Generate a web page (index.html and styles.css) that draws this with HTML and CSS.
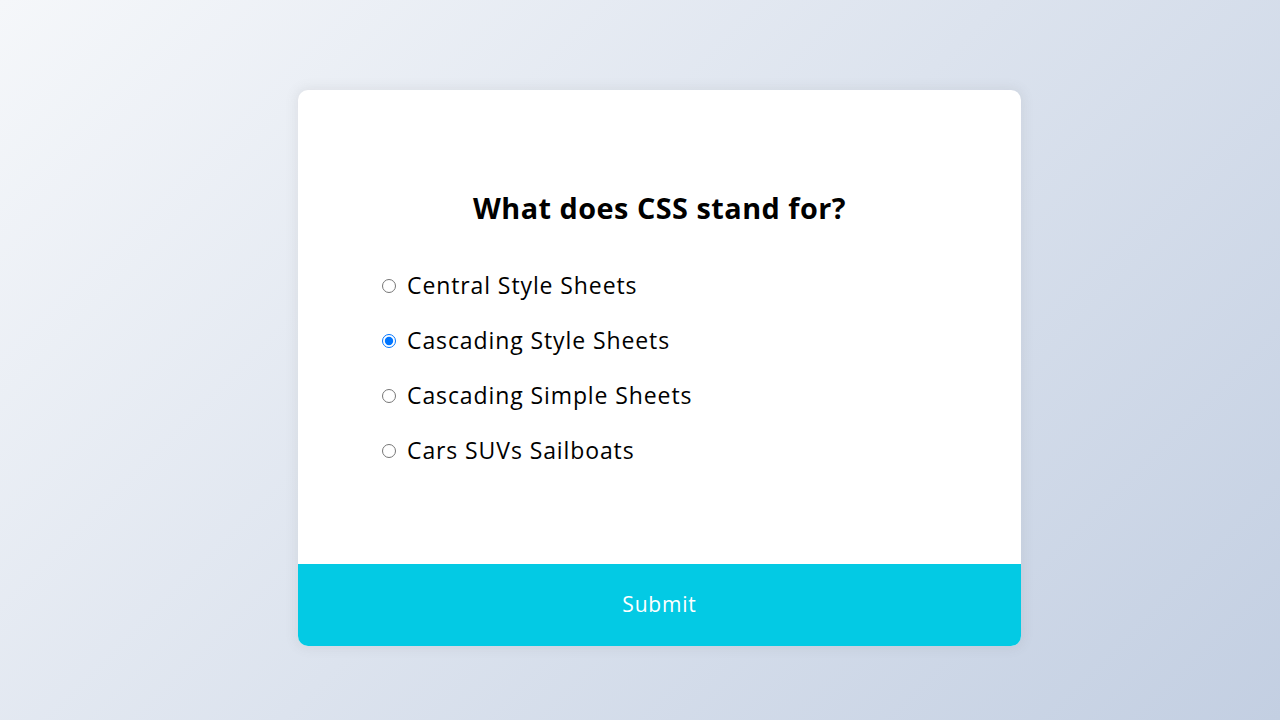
FILE: index.html
```html
<!DOCTYPE html>
<html lang="en">
<head>
<meta charset="UTF-8">
<title>Quiz</title>
<link rel="stylesheet" href="styles.css">
</head>
<body>
  <div class="stage">
    <div class="quiz-container">
      <div class="quiz-header">
        <h2 class="question">What does CSS stand for?</h2>
        <ul class="answers">
          <li><input type="radio" name="answer" id="a" class="answer"> <label for="a">Central Style Sheets</label></li>
          <li><input type="radio" name="answer" id="b" class="answer" checked> <label for="b">Cascading Style Sheets</label></li>
          <li><input type="radio" name="answer" id="c" class="answer"> <label for="c">Cascading Simple Sheets</label></li>
          <li><input type="radio" name="answer" id="d" class="answer"> <label for="d">Cars SUVs Sailboats</label></li>
        </ul>
      </div>
      <button class="submit">Submit</button>
    </div>
  </div>
</body>
</html>
```

FILE: styles.css
```css
* { box-sizing: border-box; }
html, body { margin: 0; height: 100%; }
body {
  background: linear-gradient(135deg, #f5f7fa 0%, #c3cfe2 100%);
  font-family: "Open Sans", "Noto Sans", sans-serif;
  overflow: hidden;
}
.stage {
  padding: 90px 0 0 298px;
}
.quiz-container {
  width: 723px;
  background: #fff;
  border-radius: 10px;
  box-shadow: 0 0 12px 2px rgba(100, 100, 100, 0.1);
  overflow: hidden;
}
.quiz-header {
  padding: 77px 77px 76px;
}
.question {
  margin: 0;
  padding: 19px;
  text-align: center;
  font-size: 28.8px;
  font-weight: 700;
  letter-spacing: 0.5px;
  line-height: 43px;
  color: #000;
}
.answers {
  list-style: none;
  padding: 0;
  margin: 19px 0;
}
.answers li {
  font-size: 23px;
  line-height: 35px;
  letter-spacing: 0.9px;
  margin: 20.1px 0;
  color: #000;
  display: flex;
  align-items: center;
}
.answer {
  width: 14px;
  height: 14px;
  margin: 0 5px 0 7px;
}
.answers label {
  margin-left: 6px;
  cursor: pointer;
}
.submit {
  display: block;
  width: 100%;
  border: none;
  background: #03cae4;
  color: #fff;
  font-family: inherit;
  font-size: 21px;
  letter-spacing: 0.8px;
  line-height: 32px;
  padding: 24px 25px 26px;
  cursor: pointer;
}
```
